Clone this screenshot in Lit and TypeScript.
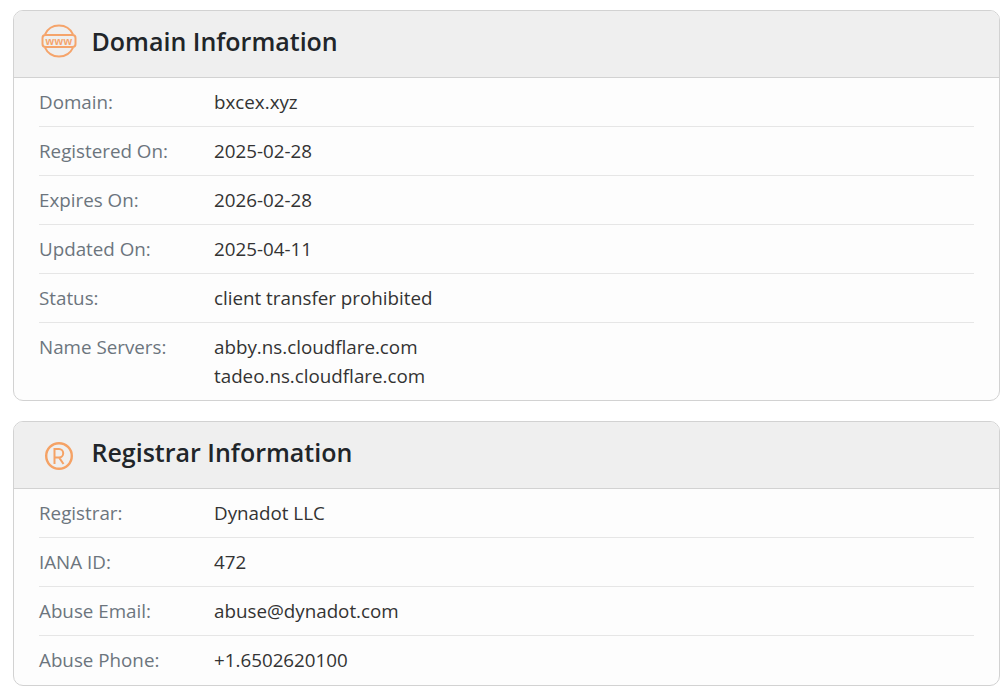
import { LitElement, html, css } from "lit";
import { customElement } from "lit/decorators.js";

type Row = { k: string; v: string[] };
const domain: Row[] = [
  { k: "Domain:", v: ["bxcex.xyz"] },
  { k: "Registered On:", v: ["2025-02-28"] },
  { k: "Expires On:", v: ["2026-02-28"] },
  { k: "Updated On:", v: ["2025-04-11"] },
  { k: "Status:", v: ["client transfer prohibited"] },
  { k: "Name Servers:", v: ["abby.ns.cloudflare.com", "tadeo.ns.cloudflare.com"] },
];
const registrar: Row[] = [
  { k: "Registrar:", v: ["Dynadot LLC"] },
  { k: "IANA ID:", v: ["472"] },
  { k: "Abuse Email:", v: ["abuse@dynadot.com"] },
  { k: "Abuse Phone:", v: ["+1.6502620100"] },
];

const wwwIcon = html`<svg class="icon" viewBox="0 0 36 36" width="36" height="36" fill="none" stroke="#f5a46b" stroke-width="1.800">
  <path d="M3.930 11.500A15.500 15.500 0 0 1 32.070 11.500" />
  <path d="M3.930 24.500A15.500 15.500 0 0 0 32.070 24.500" />
  <rect x="1.500" y="12" width="33" height="12" rx="3" stroke-width="2" />
  <text x="18" y="21.800" text-anchor="middle" class="www">www</text>
</svg>`;

const rIcon = html`<svg class="icon" viewBox="0 0 36 36" width="36" height="36" fill="none" stroke="#f5a265" stroke-width="2.400">
  <circle cx="18" cy="22" r="12.800" />
  <path d="M13.500 30V15h4.500a4.200 4.200 0 0 1 0 8.400H13.500M18 23.400l4.500 6.600" stroke-width="2"/>
</svg>`;

@customElement("app-root")
export class AppRoot extends LitElement {
  static styles = css`
    :host { display: block; background: #fff; padding: 10px 8px 0 13px; font-family: "Open Sans", sans-serif; height: 693px; box-sizing: border-box; overflow: hidden; }
    .card { border: 1px solid #d2d2d2; border-radius: 10px; background: #fdfdfd; margin-bottom: 20px; overflow: hidden; }
    .card:last-child .rows { padding-bottom: 1px; }
    .head { display: flex; align-items: center; height: 66px; background: #efefef; border-bottom: 1px solid #d2d2d2; padding-left: 27px; }
    .icon { flex: none; margin-right: 14.500px; position: relative; top: -3px; }
    h2 { margin: 0; font-size: 25px; font-weight: 600; color: #212529; line-height: 1; position: relative; top: -3px; }
    .www { font: 700 11px "Liberation Sans", sans-serif; fill: #f5a46b; stroke: none; letter-spacing: 0.5px; }
    .rows { padding: 0 25px; }
    .row { display: flex; padding: 10px 0 9px; border-top: 1px solid #e6e6e6; font-size: 18.800px; line-height: 29px; color: #333; }
    .row:first-child { border-top: 0; }
    .k { width: 175px; flex: none; color: #6c757d; }
    .v div { white-space: nowrap; }
  `;

  private card(title: string, icon: unknown, rows: Row[]) {
    return html`<section class="card">
      <div class="head">${icon}<h2>${title}</h2></div>
      <div class="rows">
        ${rows.map((r) => html`<div class="row"><div class="k">${r.k}</div><div class="v">${r.v.map((l) => html`<div>${l}</div>`)}</div></div>`)}
      </div>
    </section>`;
  }

  render() {
    return html`${this.card("Domain Information", wwwIcon, domain)}${this.card("Registrar Information", rIcon, registrar)}`;
  }
}
